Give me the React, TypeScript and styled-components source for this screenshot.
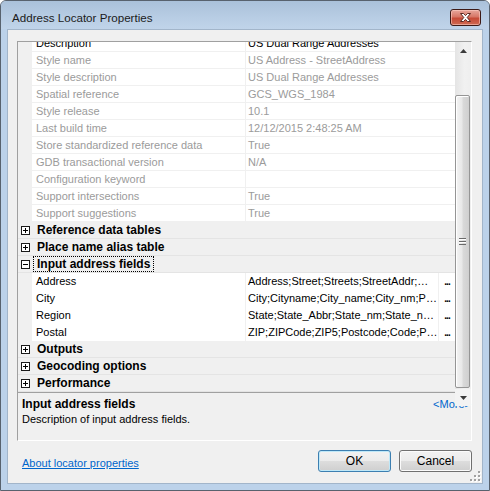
import React from 'react';
import styled, { createGlobalStyle } from 'styled-components';

const Global = createGlobalStyle`
  html, body { margin: 0; padding: 0; background: #ffffff; }
  body { font-family: "Liberation Sans", Arial, sans-serif; }
  * { box-sizing: border-box; }
`;

const Window = styled.div`
  width: 490px;
  height: 491px;
  border: 1px solid #58626e;
  border-radius: 6px 6px 0 0;
  background: #bcd2ea;
  display: flex;
  flex-direction: column;
  overflow: hidden;
`;

const TitleBar = styled.div`
  height: 28px;
  flex: none;
  display: flex;
  align-items: flex-start;
  padding: 10px 8px 0 11px;
  background: linear-gradient(to bottom, #aac1da 0%, #b8cde4 60%, #c0d4ea 100%);
`;

const TitleText = styled.div`
  font: 11.6px/14px "Liberation Sans", Arial, sans-serif;
  color: #1b1b1b;
`;

const CloseButton = styled.div`
  margin-left: auto;
  margin-top: -2px;
  width: 31px;
  height: 17px;
  border: 1px solid #3d1a16;
  border-radius: 3px;
  background: linear-gradient(to bottom, #e8a79c 0%, #d77767 45%, #c64a37 55%, #cf6a52 100%);
  box-shadow: inset 0 0 0 1px rgba(255, 210, 200, 0.55);
  display: flex;
  align-items: center;
  justify-content: center;
`;

const Client = styled.div`
  position: relative;
  flex: 1;
  margin: 0 6px 6px;
  border: 1px solid #a2b5ca;
  background: #f0f0f0;
  display: flex;
  flex-direction: column;
  padding: 11px 10px 0 9px;
`;

const Panel = styled.div`
  position: relative;
  flex: none;
  width: 455px;
  height: 400px;
  border-top: 1px solid #a0a0a0;
  border-left: 1px solid #a0a0a0;
  border-right: 1px solid #ffffff;
  border-bottom: 1px solid #ffffff;
  display: flex;
  flex-direction: column;
`;

const GridView = styled.div`
  height: 350px;
  flex: none;
  overflow: hidden;
  background: #f0f0f0;
`;

const GridList = styled.div`
  width: 437px;
  margin-top: -7px;
  display: flex;
  flex-direction: column;
`;

const PropRow = styled.div`
  height: 17px;
  display: grid;
  grid-template-columns: 14px 214px 209px;
  font-size: 11px;
  line-height: 16px;
`;

const Margin = styled.div`
  background: #f0f0f0;
`;

const NameCell = styled.div<{ $disabled?: boolean }>`
  background: #ffffff;
  border-right: 1px solid #f0f0f0;
  border-bottom: 1px solid #f0f0f0;
  padding-left: 4px;
  color: ${(p) => (p.$disabled ? '#9b9b9b' : '#000000')};
  white-space: nowrap;
  overflow: hidden;
`;

const ValueCell = styled.div<{ $disabled?: boolean }>`
  display: flex;
  background: #ffffff;
  border-bottom: 1px solid #f0f0f0;
  color: ${(p) => (p.$disabled ? '#9b9b9b' : '#000000')};
  min-width: 0;
`;

const ValueText = styled.div`
  flex: 1;
  min-width: 0;
  padding-left: 2px;
  white-space: nowrap;
  overflow: hidden;
`;

const DotsButton = styled.div`
  width: 17px;
  flex: none;
  border-left: 1px solid #f0f0f0;
  font-weight: bold;
  font-size: 10px;
  letter-spacing: -1px;
  text-align: center;
  color: #000;
  line-height: 18px;
`;

const CategoryRow = styled.div`
  height: 17px;
  display: flex;
  align-items: center;
  background: #f0f0f0;
  border-bottom: 1px solid #e4e4e4;
`;

const Expander = styled.div`
  width: 14px;
  flex: none;
  display: flex;
  align-items: center;
  padding-left: 3px;
`;

const CategoryLabel = styled.div<{ $focused?: boolean }>`
  margin-left: 1px;
  height: 16px;
  padding: 0 3px 0 3px;
  border: 1px dotted ${(p) => (p.$focused ? '#000000' : 'transparent')};
  font: bold 12px/14px "Liberation Sans", Arial, sans-serif;
  color: #000;
  white-space: nowrap;
`;

const ScrollBar = styled.div`
  position: absolute;
  top: 0;
  right: 0;
  width: 16px;
  height: 364px;
  background: linear-gradient(to right, #e4e4e4, #f1f1f1 60%, #eeeeee);
  display: flex;
  flex-direction: column;
`;

const ArrowButton = styled.div<{ $end?: boolean }>`
  height: 17px;
  flex: none;
  display: flex;
  align-items: center;
  justify-content: center;
  background: ${(p) => (p.$end ? '#f3f3f3' : 'transparent')};
`;

const Track = styled.div`
  flex: 1;
  padding: 36px 1px 0 0;
`;

const Thumb = styled.div`
  height: 293px;
  border: 1px solid #959595;
  border-radius: 2px;
  background: linear-gradient(to right, #f4f4f4 0%, #e8e8e8 45%, #d9d9d9 55%, #cfcfcf 100%);
  box-shadow: inset 1px 1px 0 #ffffff;
  display: flex;
  align-items: center;
  justify-content: center;
`;

const Splitter = styled.div`
  height: 2px;
  flex: none;
  border-top: 1px solid #a0a0a0;
`;

const DescPane = styled.div`
  flex: 1;
  padding: 3px 0 0 4px;
  font-size: 11px;
  line-height: 15px;
  color: #000;
`;

const DescHeader = styled.div`
  display: flex;
  justify-content: space-between;
  align-items: baseline;
`;

const DescTitle = styled.div`
  font: bold 12px/15px "Liberation Sans", Arial, sans-serif;
`;

const MoreLink = styled.span`
  color: #0066cc;
  font-size: 11px;
`;

const Footer = styled.div`
  display: flex;
  align-items: flex-start;
  padding: 9px 0 0 5px;
  width: 455px;
`;

const AboutLink = styled.a`
  margin-top: 6px;
  font: 11px/14px "Liberation Sans", Arial, sans-serif;
  color: #0066cc;
  text-decoration: underline;
`;

const Buttons = styled.div`
  margin-left: auto;
  display: flex;
  gap: 8px;
`;

const Button = styled.div<{ $default?: boolean }>`
  width: 73px;
  height: 22px;
  border: 1px solid ${(p) => (p.$default ? '#3c7fb1' : '#707070')};
  border-radius: 3px;
  background: linear-gradient(to bottom, #f2f2f2 0%, #ebebeb 50%, #dddddd 51%, #cfcfcf 100%);
  box-shadow: inset 0 0 0 1px ${(p) => (p.$default ? '#bfe8f8' : '#fbfbfb')};
  display: flex;
  align-items: center;
  justify-content: center;
  font: 12px/14px "Liberation Sans", Arial, sans-serif;
  color: #000;
`;

const Grip = styled.svg`
  position: absolute;
  right: 1px;
  bottom: 1px;
`;

type Prop = { name: string; value: string; disabled?: boolean; dots?: boolean };

const generalProps: Prop[] = [
  { name: 'Description', value: 'US Dual Range Addresses' },
  { name: 'Style name', value: 'US Address - StreetAddress', disabled: true },
  { name: 'Style description', value: 'US Dual Range Addresses', disabled: true },
  { name: 'Spatial reference', value: 'GCS_WGS_1984', disabled: true },
  { name: 'Style release', value: '10.1', disabled: true },
  { name: 'Last build time', value: '12/12/2015 2:48:25 AM', disabled: true },
  { name: 'Store standardized reference data', value: 'True', disabled: true },
  { name: 'GDB transactional version', value: 'N/A', disabled: true },
  { name: 'Configuration keyword', value: '', disabled: true },
  { name: 'Support intersections', value: 'True', disabled: true },
  { name: 'Support suggestions', value: 'True', disabled: true },
];

const inputProps: Prop[] = [
  { name: 'Address', value: 'Address;Street;Streets;StreetAddr;…', dots: true },
  { name: 'City', value: 'City;Cityname;City_name;City_nm;P…', dots: true },
  { name: 'Region', value: 'State;State_Abbr;State_nm;State_n…', dots: true },
  { name: 'Postal', value: 'ZIP;ZIPCode;ZIP5;Postcode;Code;P…', dots: true },
];

const Box = ({ open }: { open?: boolean }) => (
  <svg width="9" height="9" viewBox="0 0 9 9">
    <rect x="0.5" y="0.5" width="8" height="8" fill="#ffffff" stroke="#1a1a1a" />
    <line x1="2" y1="4.5" x2="7" y2="4.5" stroke="#000" />
    {!open && <line x1="4.5" y1="2" x2="4.5" y2="7" stroke="#000" />}
  </svg>
);

const Row = ({ p }: { p: Prop }) => (
  <PropRow>
    <Margin />
    <NameCell $disabled={p.disabled}>{p.name}</NameCell>
    <ValueCell $disabled={p.disabled}>
      <ValueText>{p.value}</ValueText>
      {p.dots && <DotsButton>...</DotsButton>}
    </ValueCell>
  </PropRow>
);

const Category = ({ label, open, focused }: { label: string; open?: boolean; focused?: boolean }) => (
  <CategoryRow>
    <Expander>
      <Box open={open} />
    </Expander>
    <CategoryLabel $focused={focused}>{label}</CategoryLabel>
  </CategoryRow>
);

export default function App() {
  return (
    <>
      <Global />
      <Window>
        <TitleBar>
          <TitleText>Address Locator Properties</TitleText>
          <CloseButton>
            <svg width="13" height="11" viewBox="0 0 13 11">
              <path
                d="M1.5 1.5 L4.5 1.5 L6.5 3.6 L8.5 1.5 L11.5 1.5 L8.2 5.5 L11.5 9.5 L8.5 9.5 L6.5 7.4 L4.5 9.5 L1.5 9.5 L4.8 5.5 Z"
                fill="#ffffff"
                stroke="#5a2a22"
                strokeWidth="1"
                strokeLinejoin="round"
              />
            </svg>
          </CloseButton>
        </TitleBar>
        <Client>
          <Panel>
            <GridView>
              <GridList>
                {generalProps.map((p) => (
                  <Row key={p.name} p={p} />
                ))}
                <Category label="Reference data tables" />
                <Category label="Place name alias table" />
                <Category label="Input address fields" open focused />
                {inputProps.map((p) => (
                  <Row key={p.name} p={p} />
                ))}
                <Category label="Outputs" />
                <Category label="Geocoding options" />
                <Category label="Performance" />
              </GridList>
            </GridView>
            <Splitter />
            <DescPane>
              <DescHeader>
                <DescTitle>Input address fields</DescTitle>
                <MoreLink>&lt;More&gt;</MoreLink>
              </DescHeader>
              <div>Description of input address fields.</div>
            </DescPane>
            <ScrollBar>
              <ArrowButton>
                <svg width="7" height="4" viewBox="0 0 7 4">
                  <path d="M3.5 0 L7 4 L0 4 Z" fill="#3a3a3a" />
                </svg>
              </ArrowButton>
              <Track>
                <Thumb>
                  <svg width="7" height="7" viewBox="0 0 7 7">
                    <rect x="0" y="0" width="7" height="1" fill="#6a6a6a" />
                    <rect x="0" y="3" width="7" height="1" fill="#6a6a6a" />
                    <rect x="0" y="6" width="7" height="1" fill="#6a6a6a" />
                    <rect x="0" y="1" width="7" height="1" fill="#ffffff" />
                    <rect x="0" y="4" width="7" height="1" fill="#ffffff" />
                  </svg>
                </Thumb>
              </Track>
              <ArrowButton $end>
                <svg width="7" height="4" viewBox="0 0 7 4">
                  <path d="M0 0 L7 0 L3.5 4 Z" fill="#3a3a3a" />
                </svg>
              </ArrowButton>
            </ScrollBar>
          </Panel>
          <Footer>
            <AboutLink href="#">About locator properties</AboutLink>
            <Buttons>
              <Button $default>OK</Button>
              <Button>Cancel</Button>
            </Buttons>
          </Footer>
          <Grip width="11" height="11" viewBox="0 0 11 11">
            {[
              [8, 0],
              [8, 4],
              [4, 4],
              [8, 8],
              [4, 8],
              [0, 8],
            ].map(([x, y]) => (
              <g key={`${x}-${y}`}>
                <rect x={x + 1} y={y + 1} width="2" height="2" fill="#ffffff" />
                <rect x={x} y={y} width="2" height="2" fill="#a0a0a0" />
              </g>
            ))}
          </Grip>
        </Client>
      </Window>
    </>
  );
}
